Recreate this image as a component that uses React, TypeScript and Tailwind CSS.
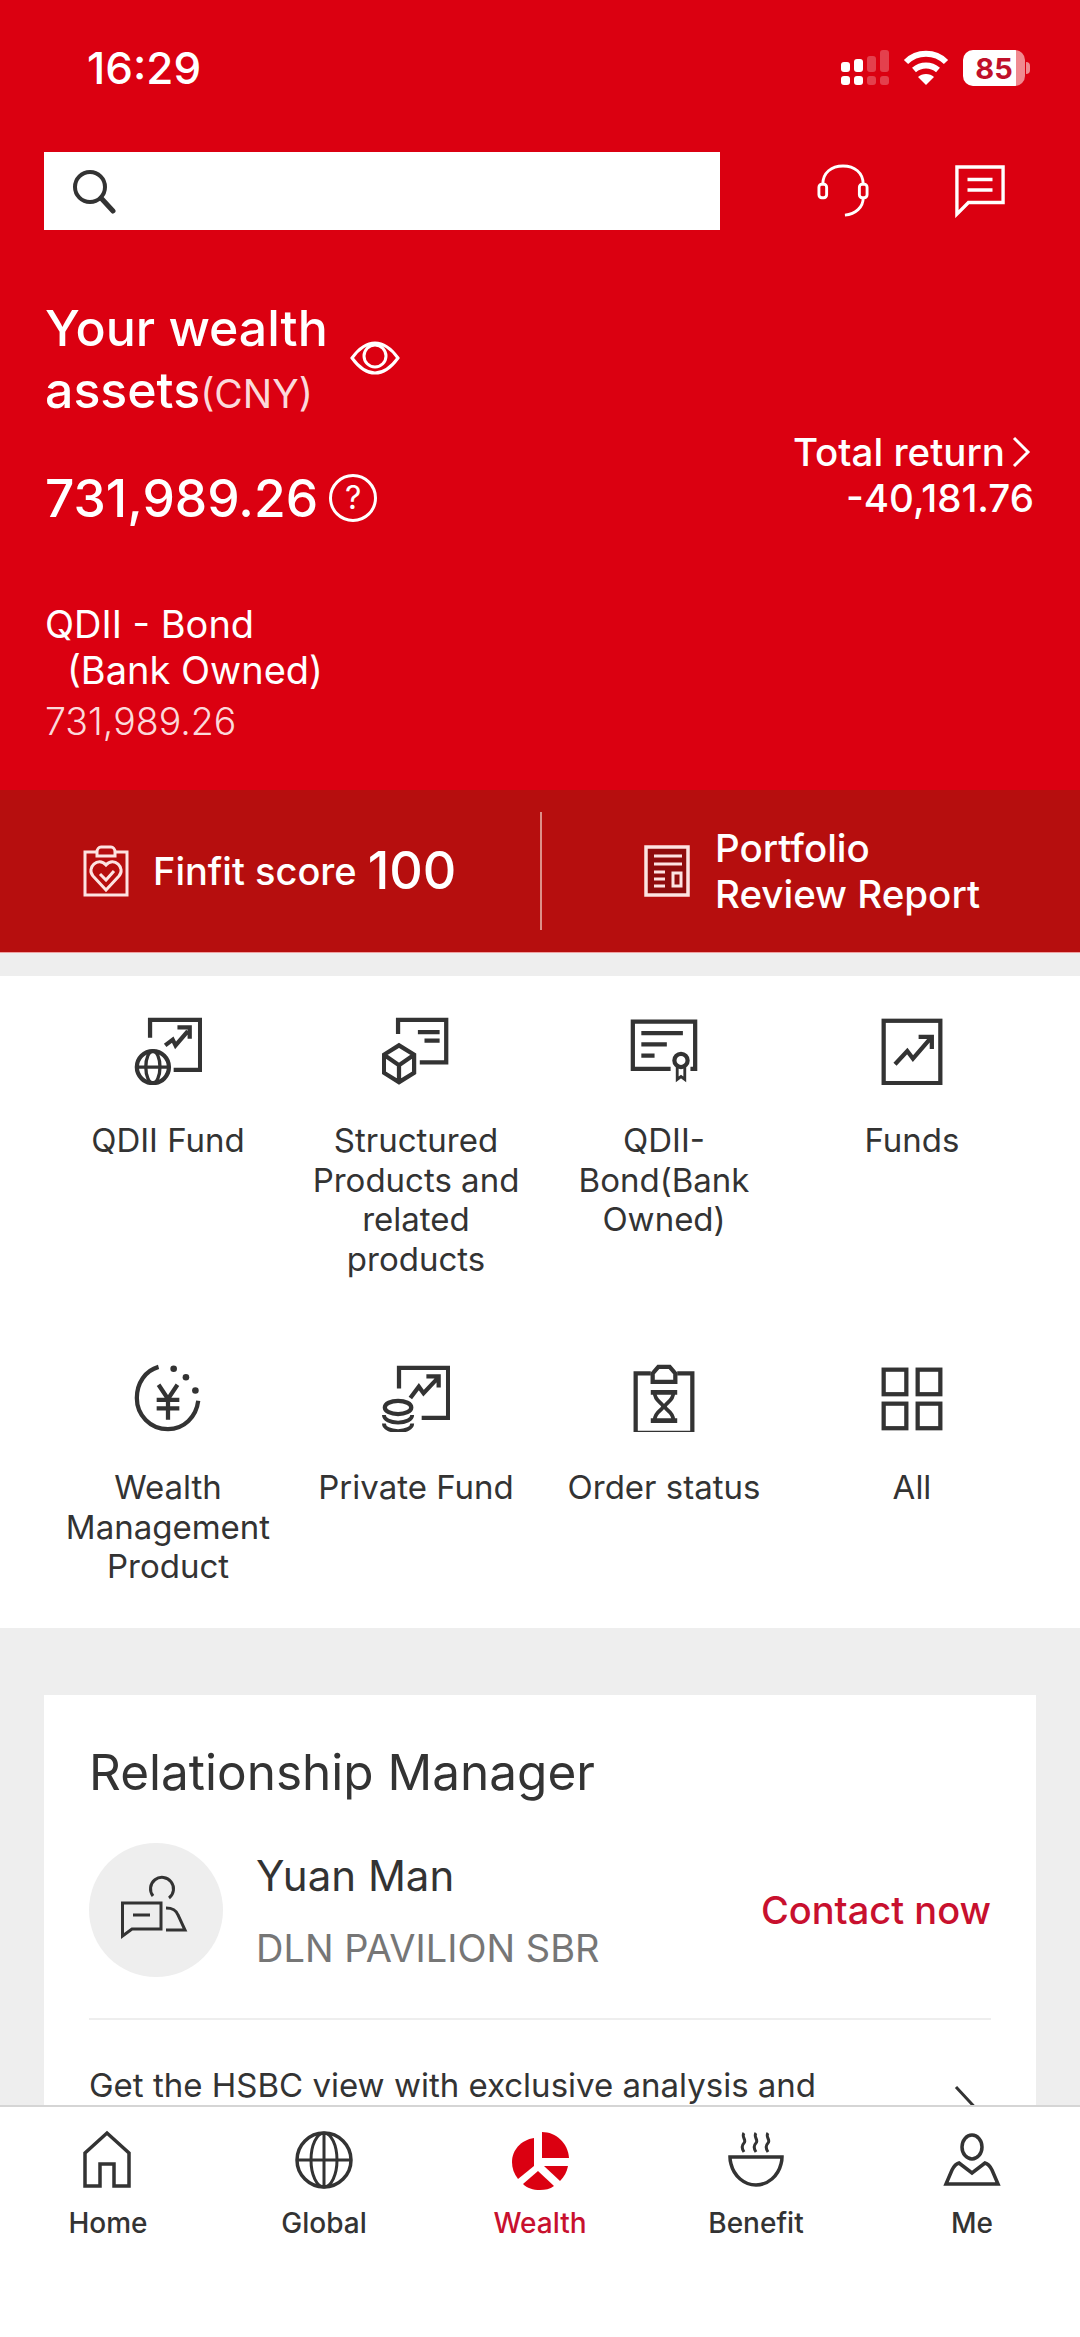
import React from 'react';

const font = "font-['Inter','Liberation_Sans',sans-serif]";

const Svg: React.FC<{ size?: number; vb?: string; className?: string; children: React.ReactNode }> = ({ size = 68, vb = '0 0 72 72', className = '', children }) => (
  <svg width={size} height={size} viewBox={vb} fill="none" stroke="currentColor" className={className}>
    {children}
  </svg>
);

const QdiiIcon = () => (
  <Svg>
    <path d="M17 22V3h53v53H42" strokeWidth={4.5} />
    <path d="M33 30l8-6 3 6 13-15M46 11h13v12" strokeWidth={4.5} />
    <circle cx="20" cy="53" r="17" strokeWidth={4.5} />
    <ellipse cx="20" cy="53" rx="7.5" ry="17" strokeWidth={3.5} />
    <path d="M3 53h34" strokeWidth={3.5} />
  </Svg>
);

const StructuredIcon = () => (
  <Svg>
    <path d="M17 18V3h51v45H40" strokeWidth={4.5} />
    <path d="M38 16h23M45 25h16" strokeWidth={4.5} />
    <path d="M18 30l16 10v19L18 69 2 59V40zM2 40l16 11 16-11M18 51v18" strokeWidth={4.5} />
  </Svg>
);

const BondIcon = () => (
  <Svg>
    <path d="M43 55H3V5h66v50h-5" strokeWidth={4.5} />
    <path d="M12 17h44M12 29h27M12 41h14" strokeWidth={4.5} />
    <circle cx="54" cy="46" r="7" strokeWidth={4.5} />
    <path d="M50 53v13l4-3 4 3V53" strokeWidth={3} />
  </Svg>
);

const FundsIcon = () => (
  <Svg>
    <rect x="6" y="4" width="60" height="66" strokeWidth={4.5} />
    <path d="M18 50l13-14 6 8 19-22M43 21h14v13" strokeWidth={4.5} />
  </Svg>
);

const WealthIcon = () => (
  <Svg>
    <path d="M26 3C12 7 3 20 3 36c0 18 14 33 33 33 17 0 30-13 32-30" strokeWidth={4.5} />
    <circle cx="42" cy="5" r="3.5" fill="currentColor" stroke="none" />
    <circle cx="55" cy="14" r="3.5" fill="currentColor" stroke="none" />
    <circle cx="65" cy="28" r="3.5" fill="currentColor" stroke="none" />
    <path d="M26 22l10 15 10-15M24 38h24M24 47h24M36 37v22" strokeWidth={4.5} />
  </Svg>
);

const PrivateIcon = () => (
  <Svg>
    <path d="M18 26V4h52v53H42" strokeWidth={4.5} />
    <path d="M30 36l9-12 5 7 15-16M47 13h13v12" strokeWidth={4.5} />
    <ellipse cx="17" cy="46" rx="14" ry="7" strokeWidth={4.5} />
    <path d="M2 54c0 5 7 8 15 8s15-3 15-8M2 63c0 5 7 8 15 8s15-3 15-8" strokeWidth={4} />
  </Svg>
);

const OrderIcon = () => (
  <Svg>
    <path d="M22 10H6v63h60V10H50" strokeWidth={4.5} />
    <path d="M24 19V10l6-7h12l6 7v9z" strokeWidth={4.5} />
    <path d="M22 30h28M22 60h28" strokeWidth={5} />
    <path d="M26 30c0 10 9 11 9 15s-9 5-9 15M46 30c0 10-9 11-9 15s9 5 9 15" strokeWidth={4} />
  </Svg>
);

const AllIcon = () => (
  <Svg>
    <rect x="6" y="6" width="24" height="26" strokeWidth={4.5} />
    <rect x="42" y="6" width="24" height="26" strokeWidth={4.5} />
    <rect x="6" y="42" width="24" height="26" strokeWidth={4.5} />
    <rect x="42" y="42" width="24" height="26" strokeWidth={4.5} />
  </Svg>
);

const products = [
  { icon: <QdiiIcon />, label: 'QDII Fund' },
  { icon: <StructuredIcon />, label: 'Structured Products and related products' },
  { icon: <BondIcon />, label: 'QDII-Bond(Bank Owned)' },
  { icon: <FundsIcon />, label: 'Funds' },
  { icon: <WealthIcon />, label: 'Wealth Management Product' },
  { icon: <PrivateIcon />, label: 'Private Fund' },
  { icon: <OrderIcon />, label: 'Order status' },
  { icon: <AllIcon />, label: 'All' },
];

const tabs = [
  {
    label: 'Home',
    icon: (
      <Svg size={60} vb="0 0 60 60">
        <path d="M7 56V23L29 3l22 20v33H36V34H22v22z" strokeWidth={3.5} />
      </Svg>
    ),
  },
  {
    label: 'Global',
    icon: (
      <Svg size={60} vb="0 0 60 60">
        <circle cx="30" cy="30" r="27" strokeWidth={3.5} />
        <ellipse cx="30" cy="30" rx="13" ry="27" strokeWidth={3} />
        <path d="M3 30h54M30 3v54" strokeWidth={3} />
      </Svg>
    ),
  },
  {
    label: 'Wealth',
    active: true,
    icon: (
      <Svg size={60} vb="0 0 60 60">
        <path d="M24 8v28L8 49C4 44 2 38 2 32 2 20 11 10 24 8z" fill="#db0011" stroke="none" />
        <path d="M32 2c14 0 26 11 27 26H32z" fill="#db0011" stroke="none" />
        <path d="M34 36h24c-1 6-4 11-8 15z" fill="#db0011" stroke="none" />
        <path d="M28 41l16 15c-4 3-9 4-14 4-7 0-13-2-17-6z" fill="#db0011" stroke="none" />
      </Svg>
    ),
  },
  {
    label: 'Benefit',
    icon: (
      <Svg size={60} vb="0 0 60 60">
        <path d="M4 27h52c0 3 0 4-1 7-3 12-13 21-25 21S8 46 5 34c-1-3-1-4-1-7z" strokeWidth={3.5} />
        <path d="M18 3c-3 4 3 7 0 10s-2 6 0 9M30 3c-3 4 3 7 0 10s-2 6 0 9M42 3c-3 4 3 7 0 10s-2 6 0 9" strokeWidth={3} />
      </Svg>
    ),
  },
  {
    label: 'Me',
    icon: (
      <Svg size={60} vb="0 0 60 60">
        <ellipse cx="30" cy="17" rx="10" ry="12" strokeWidth={3.5} />
        <path d="M4 54h52L50 40q-3-6-7-7L30 43 17 33q-4 1-7 7z" strokeWidth={3.5} />
      </Svg>
    ),
  },
];

export default function App() {
  return (
    <div className={`${font} relative h-[2337px] w-[1080px] overflow-hidden bg-[#eeeeee]`}>
      {/* header */}
      <div className="h-[790px] bg-[#db0011] text-white">
        <div className="flex h-[152px] items-start justify-between pl-[87px] pr-[50px] pt-[44px]">
          <span className="text-[44px] font-medium leading-[48px]">16:29</span>
          <div className="mt-[6px] flex items-center gap-[14px]">
            <svg width="48" height="36" viewBox="0 0 48 36" fill="white">
              <rect x="0" y="12" width="9" height="10" rx="3" />
              <rect x="13" y="9" width="9" height="13" rx="3" />
              <rect x="0" y="26" width="9" height="9" rx="3" />
              <rect x="13" y="26" width="9" height="9" rx="3" />
              <g opacity="0.25">
                <rect x="26" y="6" width="9" height="16" rx="3" />
                <rect x="39" y="0" width="9" height="22" rx="3" />
                <rect x="26" y="26" width="9" height="9" rx="3" />
                <rect x="39" y="26" width="9" height="9" rx="3" />
              </g>
            </svg>
            <svg width="46" height="36" viewBox="0 0 46 36" fill="none" stroke="white" strokeWidth="6">
              <path d="M3 12c11-11 29-11 40 0M11 20c7-6 17-6 24 0" />
              <path d="M23 35l-8-8c4-4 12-4 16 0z" fill="white" stroke="none" />
            </svg>
            <div className="flex items-center">
              <div className="flex h-[36px] w-[62px] items-center justify-center rounded-[10px] bg-[linear-gradient(90deg,#ffffff_85%,#f08a90_85%)] text-[29px] font-bold leading-none text-[#c0102a]">
                85
              </div>
              <div className="ml-[1px] h-[12px] w-[4px] rounded-r-full bg-[#f08a90]" />
            </div>
          </div>
        </div>

        <div className="flex items-center pl-[44px] pr-[75px]">
          <div className="flex h-[78px] w-[676px] items-center bg-white pl-[27px] text-[#333333]">
            <svg width="46" height="46" viewBox="0 0 46 46" fill="none" stroke="currentColor">
              <circle cx="19" cy="19" r="15" strokeWidth="4" />
              <path d="M30 30l12 13" strokeWidth="5" strokeLinecap="round" />
            </svg>
          </div>
          <div className="ml-auto flex items-center gap-[86px]">
            <svg width="52" height="54" viewBox="0 0 54 56" fill="none" stroke="white" strokeWidth="3">
              <path d="M6 21C6 9 15 2 27 2s21 7 21 19" />
              <rect x="2" y="21" width="8" height="14" rx="3" />
              <rect x="44" y="21" width="8" height="14" rx="3" />
              <path d="M48 35c0 10-8 17-19 18" />
            </svg>
            <svg width="50" height="54" viewBox="0 0 52 54" fill="none" stroke="white" strokeWidth="3.5">
              <path d="M2 2h48v37H14L2 51z" />
              <path d="M13 15h26M13 26h26" />
            </svg>
          </div>
        </div>

        <div className="flex items-end justify-between pl-[45px] pr-[46px] pt-[67px]">
          <div>
            <div className="flex items-center">
              <h1 className="w-[295px] text-[50px] font-medium leading-[62px]">
                Your wealth assets<span className="text-[39px] font-normal text-[#fbd9db]">(CNY)</span>
              </h1>
              <svg className="mb-[6px] ml-[10px]" width="50" height="34" viewBox="0 0 50 34" fill="none" stroke="white" strokeWidth="3">
                <path d="M2 17C10 6 17 2 25 2s15 4 23 15c-8 11-15 15-23 15S10 28 2 17z" />
                <circle cx="25" cy="15" r="11" />
              </svg>
            </div>
            <div className="mt-[42px] flex items-center">
              <span className="text-[51.5px] font-medium leading-[62px]">731,989.26</span>
              <span className="ml-[11px] flex h-[48px] w-[48px] items-center justify-center rounded-full border-[3px] border-white text-[32px] leading-none">?</span>
            </div>
          </div>
          <div className="pb-[8px] text-right text-[38.5px] font-medium leading-[46px]">
            <div className="flex items-center justify-end">
              Total return
              <svg className="ml-[6px] mr-[3px]" width="20" height="32" viewBox="0 0 20 32" fill="none" stroke="white" strokeWidth="3">
                <path d="M3 2l14 14L3 30" />
              </svg>
            </div>
            <div>-40,181.76</div>
          </div>
        </div>

        <div className="pl-[45px] pt-[72px]">
          <p className="text-[38px] leading-[46px]">QDII - Bond</p>
          <p className="pl-[22px] text-[38px] leading-[46px]">(Bank Owned)</p>
          <p className="mt-[6px] text-[37.5px] font-light leading-[46px] text-[#fbd9db]">731,989.26</p>
        </div>
      </div>

      {/* score band */}
      <div className="flex h-[163px] items-center border-b border-[#f0a0a0] bg-[#b60e0e] text-white">
        <div className="flex w-[540px] items-center pl-[83px]">
          <svg width="46" height="52" viewBox="0 0 46 52" fill="none" stroke="#fde3e1" strokeWidth="3">
            <path d="M14 7H2v43h42V7H32" />
            <path d="M14 11V7c0-3 2-5 4-5h10c2 0 4 2 4 5v4z" />
            <path d="M23 45L10 31c-7-8 5-20 13-11 8-9 20 3 13 11z" />
            <path d="M17 29l6 6 8-9" />
          </svg>
          <span className="ml-[24px] text-[38px] font-medium">Finfit score</span>
          <span className="ml-[11px] text-[52px] font-medium leading-none">100</span>
        </div>
        <div className="h-[118px] w-[2px] bg-[#dd8f88]" />
        <div className="flex items-center pl-[102px]">
          <svg width="46" height="52" viewBox="0 0 46 52" fill="none" stroke="#fde3e1" strokeWidth="3">
            <rect x="2" y="2" width="42" height="48" fill="#8f0c0c" strokeWidth="3.5" />
            <path d="M10 11h28M10 19h28M10 27h11M10 34h11M10 41h11" />
            <rect x="29" y="28" width="8" height="13" />
          </svg>
          <div className="ml-[25px] text-[38.5px] font-medium leading-[46px]">
            <div>Portfolio</div>
            <div>Review Report</div>
          </div>
        </div>
      </div>

      {/* products */}
      <div className="mt-[23px] grid h-[652px] grid-cols-4 content-start bg-white px-[44px] pt-[41px] text-[33px] leading-[39.5px] text-[#333333]">
        {products.map((p, i) => (
          <div key={p.label} className={`flex flex-col items-center text-center ${i < 4 ? 'h-[347px]' : ''}`}>
            <div className="flex h-[68px] items-center justify-center">{p.icon}</div>
            <p className="mt-[36px] px-[18px]">{p.label}</p>
          </div>
        ))}
      </div>

      {/* relationship manager */}
      <div className="mx-[44px] mt-[67px] bg-white px-[45px] pt-[46px] text-[#333333]">
        <h2 className="text-[49.5px] font-normal leading-[62px]">Relationship Manager</h2>
        <div className="mt-[40px] flex items-center">
          <div className="flex h-[134px] w-[134px] items-center justify-center rounded-full bg-[#eeeeee]">
            <svg width="72" height="72" viewBox="31 31 72 72" fill="none" stroke="#333333" strokeWidth="3">
              <path d="M64 53a11.5 11.5 0 1 1 16 2" />
              <path d="M72 60H33.5v33L43 86h29z" />
              <path d="M44 72h17" />
              <path d="M77 65c7 0 10 2 12 7l7 15H77" />
            </svg>
          </div>
          <div className="ml-[33px]">
            <p className="text-[42px] leading-[50px]">Yuan Man</p>
            <p className="mt-[25px] text-[38px] leading-[44px] text-[#767676]">DLN PAVILION SBR</p>
          </div>
          <span className="ml-auto text-[38px] font-medium text-[#c8102e]">Contact now</span>
        </div>
        <div className="mt-[41px] h-[2px] bg-[#eeeeee]" />
        <div className="mt-[42px] flex items-start justify-between">
          <p className="text-[33px] leading-[46px]">Get the HSBC view with exclusive analysis and</p>
          <svg className="mr-[7px] mt-[23px]" width="30" height="60" viewBox="0 0 30 60" fill="none" stroke="#333333" strokeWidth="3">
            <path d="M2 2l26 28L2 58" />
          </svg>
        </div>
      </div>

      {/* bottom nav */}
      <nav className="absolute inset-x-0 bottom-0 grid h-[232px] grid-cols-5 border-t-2 border-[#d5d5d5] bg-white pt-[23px]">
        {tabs.map((t) => (
          <div key={t.label} className="flex flex-col items-center">
            <div className={t.active ? 'text-[#db0011]' : 'text-[#333333]'}>{t.icon}</div>
            <span className={`mt-[16px] text-[28px] font-medium leading-[34px] ${t.active ? 'text-[#c8102e]' : 'text-[#333333]'}`}>{t.label}</span>
          </div>
        ))}
      </nav>
    </div>
  );
}
